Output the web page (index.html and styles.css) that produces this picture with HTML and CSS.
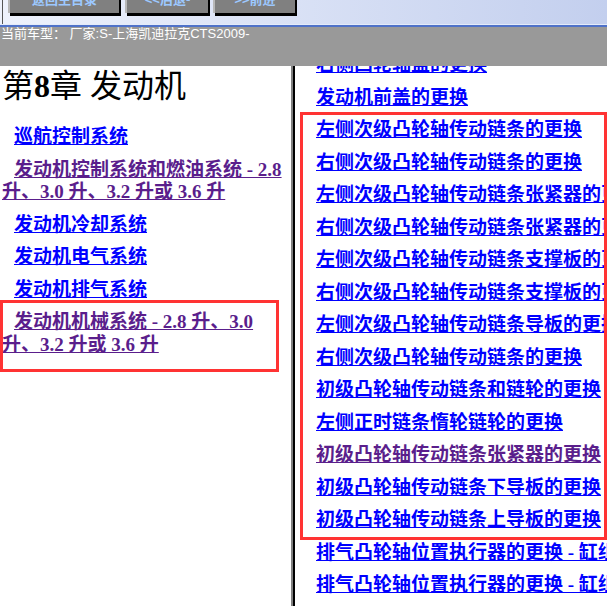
FILE: index.html
```html
<!DOCTYPE html>
<html lang="zh-CN">
<head>
  <meta charset="utf-8" />
  <title>第8章 发动机</title>
  <link rel="stylesheet" href="styles.css">
</head>
<body>
  <div class="topbar">
    <div class="tb-edge"></div>
    <button class="nav-btn btn-home">返回主目录</button>
    <button class="nav-btn btn-back">&lt;&lt;后退-</button>
    <button class="nav-btn btn-fwd">&gt;&gt;前进</button>
  </div>
  <div class="tb-rule"></div>
  <div class="carbar">当前车型： 厂家:S-上海凯迪拉克CTS2009-</div>

  <div class="frames">
    <div class="toc">
      <h1>第<b>8</b>章 发动机</h1>
      <p><a href="#">巡航控制系统</a></p>
      <p><a href="#" class="visited">发动机控制系统和燃油系统 - 2.8 升、3.0 升、3.2 升或 3.6 升</a></p>
      <p><a href="#">发动机冷却系统</a></p>
      <p><a href="#">发动机电气系统</a></p>
      <p><a href="#">发动机排气系统</a></p>
      <p><a href="#" class="visited">发动机机械系统 - 2.8 升、3.0 升、3.2 升或 3.6 升</a></p>
    </div>
    <div class="divider"></div>
    <div class="pages">
      <div class="page-list">
        <p><a href="#">右侧凸轮轴盖的更换</a></p>
        <p><a href="#">发动机前盖的更换</a></p>
        <p><a href="#">左侧次级凸轮轴传动链条的更换</a></p>
        <p><a href="#">右侧次级凸轮轴传动链条的更换</a></p>
        <p><a href="#">左侧次级凸轮轴传动链条张紧器的更换</a></p>
        <p><a href="#">右侧次级凸轮轴传动链条张紧器的更换</a></p>
        <p><a href="#">左侧次级凸轮轴传动链条支撑板的更换</a></p>
        <p><a href="#">右侧次级凸轮轴传动链条支撑板的更换</a></p>
        <p><a href="#">左侧次级凸轮轴传动链条导板的更换</a></p>
        <p><a href="#">右侧次级凸轮轴传动链条的更换</a></p>
        <p><a href="#">初级凸轮轴传动链条和链轮的更换</a></p>
        <p><a href="#">左侧正时链条惰轮链轮的更换</a></p>
        <p><a href="#" class="visited">初级凸轮轴传动链条张紧器的更换</a></p>
        <p><a href="#">初级凸轮轴传动链条下导板的更换</a></p>
        <p><a href="#">初级凸轮轴传动链条上导板的更换</a></p>
        <p><a href="#">排气凸轮轴位置执行器的更换 - 缸组 1</a></p>
        <p><a href="#">排气凸轮轴位置执行器的更换 - 缸组 2</a></p>
      </div>
    </div>
  </div>

  <!-- 标注框 -->
  <div class="mark mark-left"></div>
  <div class="mark mark-right"></div>
</body>
</html>
```

FILE: styles.css
```css
/* — 基本 — */
html, body { margin: 0; padding: 0; }
body {
  position: relative;
  width: 607px; height: 606px; overflow: hidden;
  background: #fff;
  font-family: "Liberation Serif", "Noto Sans CJK SC", serif;
}

/* — 顶部导航 — */
.topbar {
  display: flex; align-items: flex-start;
  height: 24px; overflow: hidden;
  background: linear-gradient(to right, #eef2fc, #c3cfee);
}
.tb-edge { width: 1px; height: 24px; margin-left: 2px; background: #555; }
.nav-btn {
  height: 26px; margin-top: -13px; padding: 0;
  border: none; border-left: 2px solid #b8b8b8;
  background: #808080; color: #9cc8ff;
  font: bold 13px/24px "Liberation Sans", "Noto Sans CJK SC", sans-serif;
  box-shadow: 2px 3px 0 #000;
}
.btn-home { width: 111px; margin-left: 5px; }
.btn-back { width: 83px; margin-left: 6px; }
.btn-fwd  { width: 82px; margin-left: 5px; }

.tb-rule {
  height: 1px; background: #e4ebf9;
  border-bottom: 2px solid #4f72c9;
}
.carbar {
  height: 39px; padding-left: 1px;
  background: #999; color: #fff;
  font: 13px/14px "Liberation Sans", "Noto Sans CJK SC", sans-serif;
}

/* — 框架 — */
.frames { display: flex; height: 540px; }
.toc { width: 289px; padding: 2px 0 0 2px; }
.toc h1 {
  margin: 0 0 22px;
  font-size: 32px; font-weight: normal; line-height: 36px;
}
.toc p { text-indent: 12px; }

p {
  margin: 0 0 9.8px;
  font-size: 19px; font-weight: bold; line-height: 22.7px;
}
a { color: #00f; }
a.visited { color: #5a1e8c; }

.divider {
  width: 2px; background: #000;
  border-left: 2px solid #808080;
}
.pages { flex: 1; overflow: hidden; padding-left: 21px; }
.page-list { margin-top: -12px; white-space: nowrap; }

/* — 红色标注框 — */
.mark { position: absolute; border: 3px solid #f33; box-sizing: border-box; }
.mark-left  { left: 0; top: 300px; width: 279px; height: 72px; }
.mark-right { left: 300px; top: 112px; width: 307px; height: 428px; }
```
